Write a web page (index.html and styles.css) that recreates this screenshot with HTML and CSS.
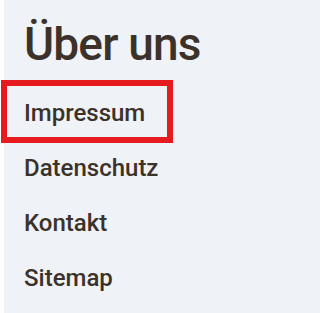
FILE: index.html
```html
<!DOCTYPE html>
<html lang="de">
<head>
<meta charset="utf-8">
<title>Über uns</title>
<link rel="stylesheet" href="styles.css">
</head>
<body>
<nav class="panel">
  <h1 class="panel-title">Über uns</h1>
  <ul class="menu">
    <li class="menu-item"><a class="menu-link menu-link--active" href="#">Impressum</a></li>
    <li class="menu-item"><a class="menu-link" href="#">Datenschutz</a></li>
    <li class="menu-item"><a class="menu-link" href="#">Kontakt</a></li>
    <li class="menu-item"><a class="menu-link" href="#">Sitemap</a></li>
  </ul>
</nav>
</body>
</html>
```

FILE: styles.css
```css
html, body {
  margin: 0;
  padding: 0;
  background: #ffffff;
}

body {
  font-family: Roboto, "Open Sans", sans-serif;
  color: #3c3229;
}

.panel {
  margin-left: 4px;
  min-height: 313px;
  background: #eff3f8;
  padding: 16px 0 0 20px;
  box-sizing: border-box;
}

.panel-title {
  margin: 0;
  font-size: 46px;
  line-height: 56px;
  font-weight: 500;
  letter-spacing: -0.8px;
  color: #3c3229;
}

.menu {
  list-style: none;
  margin: 14px 0 0 0;
  padding: 0;
}

.menu-item {
  height: 55px;
}

.menu-link {
  display: block;
  font-size: 24px;
  line-height: 55px;
  font-weight: 500;
  color: #3c3229;
  text-decoration: none;
}

.menu-link--active {
  width: 160px;
  height: 51px;
  margin-top: 1px;
  margin-left: -17px;
  padding: 4px 0 0 17px;
  box-sizing: border-box;
  line-height: 47px;
  outline: 6px solid #e51b20;
}
```
